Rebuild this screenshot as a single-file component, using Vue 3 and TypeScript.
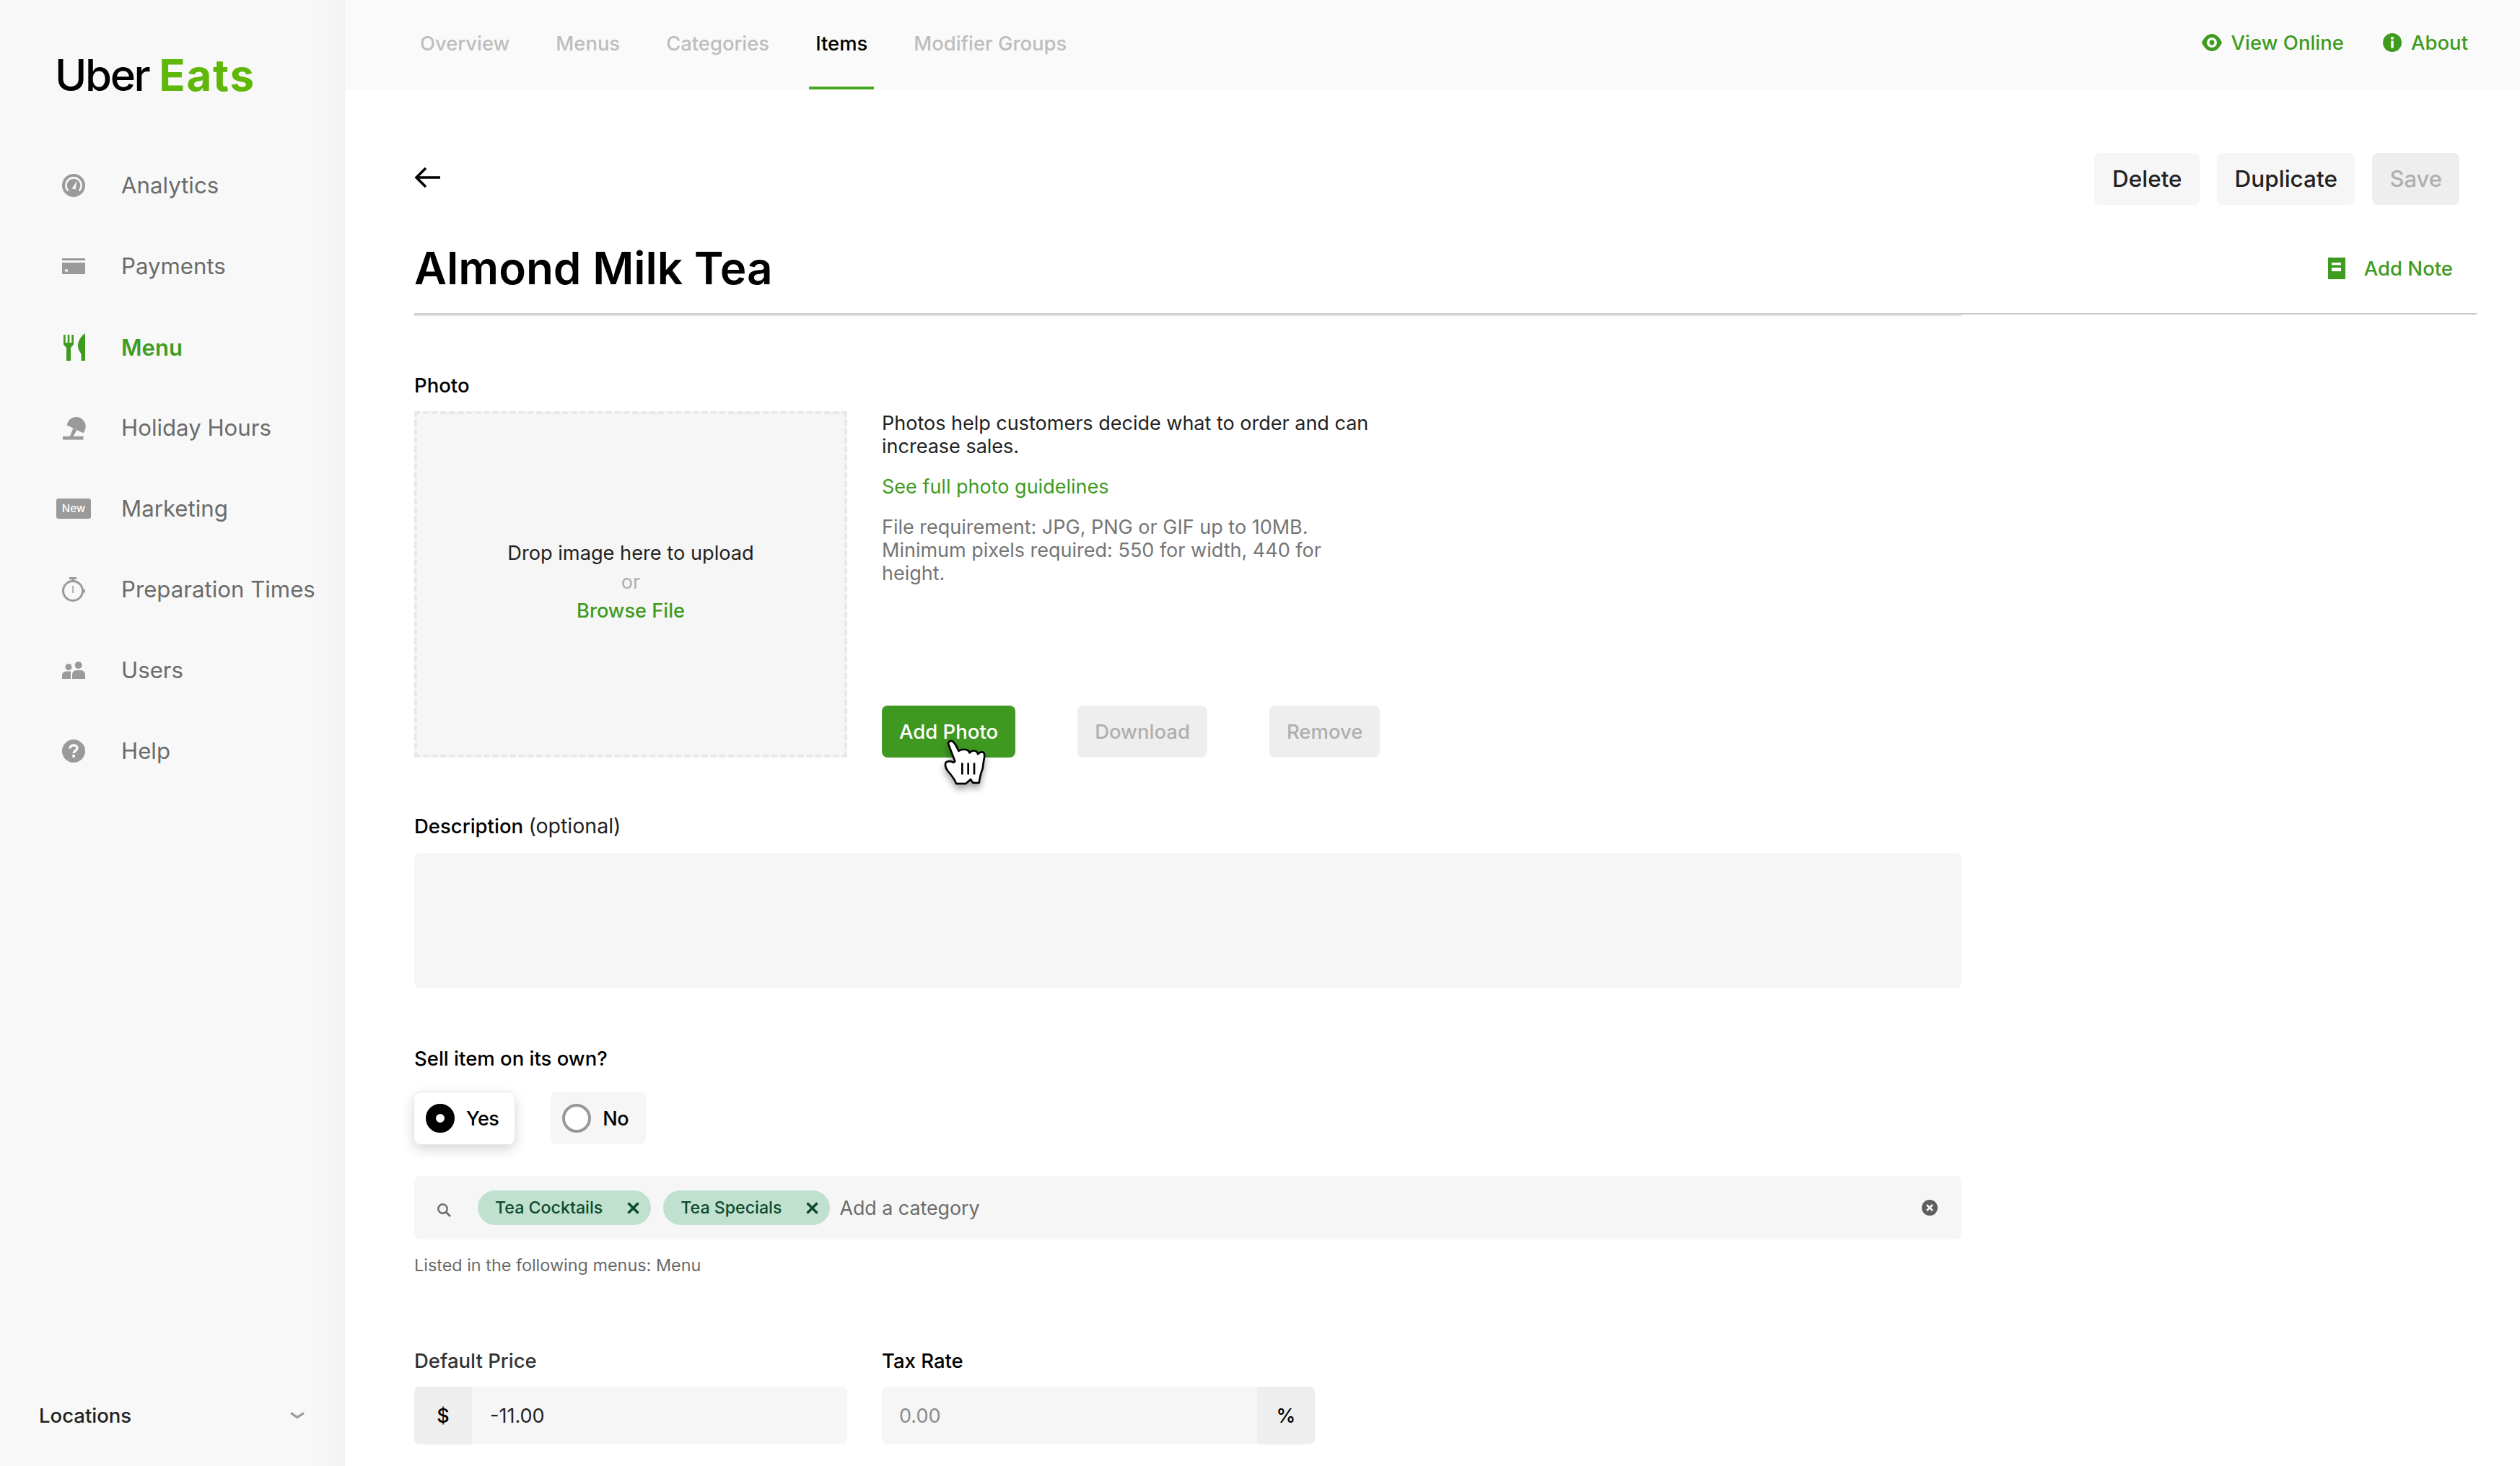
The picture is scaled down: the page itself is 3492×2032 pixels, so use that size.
<script setup lang="ts">
const tabs = [
  { label: 'Overview', active: false },
  { label: 'Menus', active: false },
  { label: 'Categories', active: false },
  { label: 'Items', active: true },
  { label: 'Modifier Groups', active: false },
]
const nav = [
  { key: 'analytics', label: 'Analytics' },
  { key: 'payments', label: 'Payments' },
  { key: 'menu', label: 'Menu' },
  { key: 'holiday', label: 'Holiday Hours' },
  { key: 'marketing', label: 'Marketing' },
  { key: 'prep', label: 'Preparation Times' },
  { key: 'users', label: 'Users' },
  { key: 'help', label: 'Help' },
]
const chips = ['Tea Cocktails', 'Tea Specials']
</script>

<template>
  <div class="page">
    <aside class="sidebar">
      <div class="logo"><span class="uber">Uber</span> <span class="eats">Eats</span></div>
      <nav class="nav">
        <div v-for="item in nav" :key="item.key" class="nav-item" :class="{ active: item.key === 'menu' }">
          <span class="nav-icon">
            <svg v-if="item.key === 'analytics'" width="32" height="32" viewBox="0 0 32 32">
              <circle cx="16" cy="16" r="16" fill="#9a9a9a" />
              <path d="M8.5 23.5A10.6 10.6 0 1 1 23.5 23.5" fill="none" stroke="#f8f8f8" stroke-width="2.6" />
              <path d="M13.6 20.5L20.6 9.5L18.6 21.6Z" fill="#f8f8f8" />
            </svg>
            <svg v-else-if="item.key === 'payments'" width="32" height="22" viewBox="0 0 32 22">
              <path d="M1 0H31A1 1 0 0 1 32 1V3H0V1A1 1 0 0 1 1 0Z" fill="#9a9a9a" />
              <path d="M0 6H32V21A1 1 0 0 1 31 22H1A1 1 0 0 1 0 21Z" fill="#9a9a9a" />
              <rect x="4" y="15.5" width="4" height="3" fill="#f8f8f8" />
            </svg>
            <svg v-else-if="item.key === 'menu'" width="32" height="38" viewBox="0 0 32 38">
              <path d="M2 2H4.7V13H7.7V2H10.3V13H13.3V2H16V15.5L12 20V38H6V20L2 15.5Z" fill="#3f9b1f" />
              <path d="M32 0V38H26.5V28.5C24 25 22 21.5 22 17.5C22 10 27 3 32 0Z" fill="#3f9b1f" />
            </svg>
            <svg v-else-if="item.key === 'holiday'" width="64" height="64" viewBox="0 0 64 64">
              <path d="M19.5 27A17.5 17.5 0 1 1 49.5 41.5Z" fill="#9a9a9a" />
              <path d="M31 33L38 36L31 48H25Z" fill="#9a9a9a" />
              <rect x="12" y="47.7" width="38" height="6.3" fill="#9a9a9a" />
            </svg>
            <span v-else-if="item.key === 'marketing'" class="badge">New</span>
            <svg v-else-if="item.key === 'prep'" width="32" height="35" viewBox="0 0 32 35">
              <rect x="10" y="0" width="10" height="3" fill="#9a9a9a" />
              <rect x="13.5" y="2" width="3" height="4" fill="#9a9a9a" />
              <circle cx="15" cy="19" r="13.5" fill="none" stroke="#9a9a9a" stroke-width="3" />
              <rect x="28.5" y="17" width="3.5" height="4.5" fill="#9a9a9a" />
              <rect x="14.3" y="12" width="1.5" height="10" fill="#9a9a9a" />
            </svg>
            <svg v-else-if="item.key === 'users'" width="32" height="24" viewBox="0 0 32 24">
              <circle cx="9" cy="7.5" r="4.5" fill="#9a9a9a" />
              <circle cx="22.7" cy="5" r="5" fill="#9a9a9a" />
              <path d="M0 24V19A5.5 5.5 0 0 1 5.5 13.5H11.5A1 1 0 0 1 12 15V24Z" fill="#9a9a9a" />
              <path d="M14 24V18A6 6 0 0 1 20 12H26A6 6 0 0 1 32 18V24Z" fill="#9a9a9a" />
            </svg>
            <svg v-else width="32" height="32" viewBox="0 0 32 32">
              <circle cx="16" cy="16" r="16" fill="#9a9a9a" />
              <path d="M11 12.5C11 6.5 21 6.5 21 12C21 15.5 16 15.5 16 19" fill="none" stroke="#f8f8f8" stroke-width="3.4" />
              <rect x="14.2" y="21" width="3.8" height="3.8" fill="#f8f8f8" />
            </svg>
          </span>
          <span>{{ item.label }}</span>
        </div>
      </nav>
      <div class="locations">
        <span>Locations</span>
        <svg width="20" height="10" viewBox="0 0 20 10"><path d="M1 1.5L10 7.5L19 1.5" fill="none" stroke="#9a9a9a" stroke-width="3.2" /></svg>
      </div>
    </aside>

    <div class="main">
      <header class="topbar">
        <div class="tabs">
          <div v-for="t in tabs" :key="t.label" class="tab" :class="{ on: t.active }">{{ t.label }}</div>
        </div>
        <div class="top-links">
          <span class="top-link">
            <svg width="28" height="24" viewBox="0 0 28 24">
              <path d="M0 12C3 5 8 0 14 0C20 0 25 5 28 12C25 19 20 24 14 24C8 24 3 19 0 12Z" fill="#3f9b1f" />
              <circle cx="14" cy="12" r="7" fill="#fafafa" />
              <circle cx="14" cy="12" r="3.4" fill="#3f9b1f" />
            </svg>
            View Online
          </span>
          <span class="top-link">
            <svg width="26" height="26" viewBox="0 0 26 26">
              <circle cx="13" cy="13" r="13" fill="#3f9b1f" />
              <rect x="11.2" y="5" width="3.6" height="3.6" fill="#fafafa" />
              <rect x="11.2" y="10.5" width="3.6" height="10" fill="#fafafa" />
            </svg>
            About
          </span>
        </div>
      </header>

      <main class="content">
        <div class="action-row">
          <svg class="back" width="36" height="30" viewBox="0 0 36 30">
            <path d="M36 15H4M16 2L3 15L16 28" fill="none" stroke="#000" stroke-width="3.6" />
          </svg>
          <div class="actions">
            <button class="btn">Delete</button>
            <button class="btn">Duplicate</button>
            <button class="btn off">Save</button>
          </div>
        </div>

        <div class="title-row">
          <h1>Almond Milk Tea</h1>
          <span class="add-note">
            <svg width="24" height="30" viewBox="0 0 24 30">
              <rect width="24" height="30" fill="#3f9b1f" />
              <rect x="5" y="7" width="13" height="3.4" fill="#fff" />
              <rect x="5" y="14" width="13" height="5" fill="#fff" />
            </svg>
            Add Note
          </span>
        </div>
        <div class="rule-a"></div>
        <div class="rule-b"></div>

        <div class="form">
          <div class="label photo-label">Photo</div>
          <div class="photo-row">
            <div class="drop">
              <div class="drop-main">Drop image here to upload</div>
              <div class="drop-or">or</div>
              <div class="drop-link">Browse File</div>
            </div>
            <div class="photo-side">
              <div class="photo-text">
                <p class="p-main">Photos help customers decide what to order and can increase sales.</p>
                <p class="p-link">See full photo guidelines</p>
                <p class="p-req">File requirement: JPG, PNG or GIF up to 10MB. Minimum pixels required: 550 for width, 440 for height.</p>
              </div>
              <div class="photo-btns">
                <button class="pbtn primary">
                  Add Photo
                  <svg class="cursor" width="60" height="67" viewBox="84 72 180 200">
                    <path d="M130 165L103 95Q100 80 115 80Q128 82 145 122Q160 112 180 118Q190 122 190 130Q205 115 220 125Q225 130 225 135Q240 122 250 130Q255 140 250 160L245 195Q235 220 230 255L205 255L195 240L175 258L135 258Q130 240 100 205Q85 185 92 170Q105 160 125 170Z" fill="#fff" stroke="#000" stroke-width="8" stroke-linejoin="round" />
                    <path d="M160 172V220M185 172V220M210 172V220" stroke="#000" stroke-width="8" fill="none" />
                  </svg>
                </button>
                <button class="pbtn dim">Download</button>
                <button class="pbtn dim">Remove</button>
              </div>
            </div>
          </div>

          <div class="label desc-label">Description <span class="opt">(optional)</span></div>
          <div class="textarea"></div>

          <div class="label sell-label">Sell item on its own?</div>
          <div class="radios">
            <div class="radio checked"><span class="dot"></span>Yes</div>
            <div class="radio"><span class="ring"></span>No</div>
          </div>

          <div class="cat-bar">
            <svg class="search" width="20" height="20" viewBox="0 0 20 20">
              <circle cx="8.5" cy="8.5" r="6.2" fill="none" stroke="#6b6b6b" stroke-width="2.4" />
              <path d="M13 13L19 19" stroke="#6b6b6b" stroke-width="2.6" />
            </svg>
            <span v-for="c in chips" :key="c" class="chip">
              {{ c }}
              <svg width="17" height="17" viewBox="0 0 17 17"><path d="M1.5 1.5L15.5 15.5M15.5 1.5L1.5 15.5" stroke="#0e4a2c" stroke-width="3.4" /></svg>
            </span>
            <span class="cat-ph">Add a category</span>
            <svg class="clear" width="22" height="22" viewBox="0 0 22 22">
              <circle cx="11" cy="11" r="11" fill="#5e5e5e" />
              <path d="M7 7L15 15M15 7L7 15" stroke="#f6f6f6" stroke-width="2.6" />
            </svg>
          </div>
          <div class="listed">Listed in the following menus: Menu</div>

          <div class="price-row">
            <div class="field">
              <div class="label dark">Default Price</div>
              <div class="input">
                <span class="addon left">$</span>
                <span class="value">-11.00</span>
              </div>
            </div>
            <div class="field">
              <div class="label">Tax Rate</div>
              <div class="input">
                <span class="value ph">0.00</span>
                <span class="addon right">%</span>
              </div>
            </div>
          </div>
        </div>
      </main>
    </div>
  </div>
</template>

<style>
html, body { margin: 0; background: #fff; }
</style>

<style scoped>
.page {
  display: flex;
  width: 3492px;
  height: 2032px;
  overflow: hidden;
  font-family: Inter, "Liberation Sans", sans-serif;
  color: #000;
}
.sidebar {
  width: 478px;
  flex: none;
  display: flex;
  flex-direction: column;
  background: linear-gradient(to right, #f8f8f8 90%, #f3f3f3);
}
.logo {
  margin: 68px 0 0 76px;
  height: 72px;
  line-height: 72px;
  font-size: 60px;
  white-space: nowrap;
  word-spacing: -3px;
}
.uber { font-weight: 500; letter-spacing: -2.4px; color: #000; }
.eats { font-weight: 700; letter-spacing: 1.8px; color: #5fb709; }
.nav { margin-top: 61px; display: flex; flex-direction: column; }
.nav-item {
  height: 112px;
  display: flex;
  align-items: center;
  padding-left: 78px;
  font-size: 31.2px;
  color: #6b6b6b;
}
.nav-item.active { color: #3f9b1f; font-weight: 600; font-size: 31px; }
.nav-icon {
  width: 48px;
  margin-right: 42px;
  display: flex;
  justify-content: center;
  align-items: center;
}
.badge {
  width: 48px;
  height: 28px;
  border-radius: 3px;
  background: #9a9a9a;
  color: #fff;
  font-size: 15px;
  font-weight: 500;
  line-height: 28px;
  text-align: center;
}
.locations {
  margin-top: auto;
  height: 60px;
  margin-bottom: 40px;
  padding: 0 56px 0 54px;
  display: flex;
  justify-content: space-between;
  align-items: center;
  font-size: 27.5px;
  font-weight: 500;
  color: #222;
}
.main { flex: 1; min-width: 0; }
.topbar {
  height: 124px;
  background: #fafafa;
  display: flex;
  justify-content: space-between;
  padding: 0 72px 0 95px;
}
.tabs { display: flex; gap: 46px; }
.tab {
  padding: 0 9px;
  height: 124px;
  line-height: 121px;
  font-size: 27.4px;
  font-weight: 500;
  color: #bdbdbd;
  box-sizing: border-box;
}
.tab.on { color: #000; border-bottom: 4px solid #46a622; }
.top-links { display: flex; gap: 54px; }
.top-link {
  display: flex;
  align-items: center;
  gap: 13px;
  font-size: 27.5px;
  font-weight: 500;
  color: #3f9b1f;
  height: 118px;
}
.content { padding: 88px 60px 0 96px; }
.action-row {
  height: 72px;
  display: flex;
  justify-content: space-between;
  align-items: center;
  padding-right: 24px;
}
.back { margin-top: -4px; }
.actions { display: flex; gap: 24px; }
.btn {
  height: 72px;
  padding: 0 24.5px 2px;
  border: 0;
  border-radius: 8px;
  background: #f6f6f6;
  font: 500 31.5px Inter, sans-serif;
  color: #222;
}
.btn.off { background: #eee; color: #afafaf; padding: 0 24px 2px; font-size: 31px; }
.title-row {
  margin-top: 52px;
  height: 72px;
  margin-bottom: 26px;
  display: flex;
  justify-content: space-between;
  align-items: center;
  padding-right: 33px;
}
h1 {
  margin: 0;
  font-size: 62px;
  font-weight: 600;
  line-height: 72px;
}
.add-note {
  display: flex;
  align-items: center;
  gap: 26px;
  font-size: 27.5px;
  font-weight: 500;
  color: #3f9b1f;
}
.rule-a { height: 2px; background: #cbcbcb; }
.rule-b { height: 2px; width: 2144px; background: #e2e2e2; }
.form { width: 2144px; }
.label {
  font-size: 27.5px;
  font-weight: 500;
  line-height: 36px;
  color: #000;
}
.label.dark { color: #333; }
.photo-label { margin: 78px 0 18px; }
.photo-row { display: flex; gap: 48px; }
.drop {
  width: 600px;
  height: 480px;
  box-sizing: border-box;
  border: 4px dashed #e8e8e8;
  background: #f6f6f6;
  padding-bottom: 6px;
  display: flex;
  flex-direction: column;
  align-items: center;
  justify-content: center;
  font-size: 27.2px;
  line-height: 40px;
}
.drop-main { color: #222; }
.drop-or { color: #afafaf; }
.drop-link { color: #3f9b1f; font-weight: 500; }
.photo-side {
  width: 700px;
  height: 480px;
  display: flex;
  flex-direction: column;
  justify-content: space-between;
}
.photo-text { padding-top: 1px; }
.photo-text p { margin: 0; font-size: 27px; line-height: 32px; }
.p-main { color: #222; }
.photo-text .p-link { color: #3f9b1f; margin-top: 24px; }
.photo-text .p-req { color: #757575; margin-top: 24px; }
.photo-btns { display: flex; gap: 86px; }
.pbtn {
  position: relative;
  height: 72px;
  padding: 0 24px;
  border: 0;
  border-radius: 8px;
  font: 500 27.5px Inter, sans-serif;
  white-space: nowrap;
}
.primary { background: #3f9820; color: #fff; }
.dim { background: #eee; color: #afafaf; }
.cursor {
  position: absolute;
  left: 86px;
  top: 46px;
  filter: drop-shadow(0 6px 5px rgba(0, 0, 0, 0.35));
}
.desc-label { margin-top: 77px; margin-bottom: 19px; }
.opt { font-weight: 400; font-size: 28.5px; color: #222; }
.textarea { height: 187px; background: #f6f6f6; border-radius: 8px; }
.sell-label { margin-top: 80px; margin-bottom: 29px; }
.radios { display: flex; gap: 50px; }
.radio {
  height: 72px;
  box-sizing: border-box;
  padding: 0 24px 0 16px;
  display: flex;
  align-items: center;
  gap: 16px;
  border-radius: 8px;
  background: #f6f6f6;
  font-size: 27px;
  letter-spacing: -0.5px;
  font-weight: 500;
}
.radio.checked {
  padding-right: 22px;
  background: #fff;
  box-shadow: 0 0 0 1px #e8e8e8, 0 6px 18px rgba(0, 0, 0, 0.18);
}
.dot {
  width: 40px;
  height: 40px;
  box-sizing: border-box;
  border: 14px solid #000;
  border-radius: 50%;
  background: #fff;
}
.ring {
  width: 40px;
  height: 40px;
  box-sizing: border-box;
  border: 4px solid #999;
  border-radius: 50%;
  background: #fff;
}
.cat-bar {
  margin-top: 44px;
  height: 88px;
  display: flex;
  align-items: center;
  background: #f6f6f6;
  border-radius: 8px;
  padding: 0 33px 0 31px;
}
.search { margin-right: 37px; margin-top: 6px; }
.chip {
  height: 48px;
  margin-right: 17px;
  padding: 0 16px 0 24px;
  display: flex;
  align-items: center;
  gap: 34px;
  border-radius: 24px;
  background: #c0e1d0;
  color: #0e4a2c;
  font-size: 23.2px;
  font-weight: 500;
}
.chip + .cat-ph { margin-left: -4px; }
.cat-ph { font-size: 26.8px; color: #6b6b6b; }
.clear { margin-left: auto; }
.listed {
  margin-top: 18px;
  font-size: 23.4px;
  line-height: 36px;
  color: #6b6b6b;
}
.price-row { display: flex; gap: 48px; margin-top: 96px; }
.field { width: 600px; }
.field .label { margin-bottom: 18px; }
.input {
  height: 80px;
  display: flex;
  align-items: center;
  background: #f6f6f6;
  border-radius: 8px;
  overflow: hidden;
  font-size: 27px;
}
.addon {
  height: 100%;
  width: 80px;
  background: #eee;
  display: flex;
  align-items: center;
  justify-content: center;
  font-weight: 500;
}
.value { flex: 1; padding-left: 25px; color: #222; }
.value.ph { color: #8a8a8a; padding-left: 24px; }
</style>
